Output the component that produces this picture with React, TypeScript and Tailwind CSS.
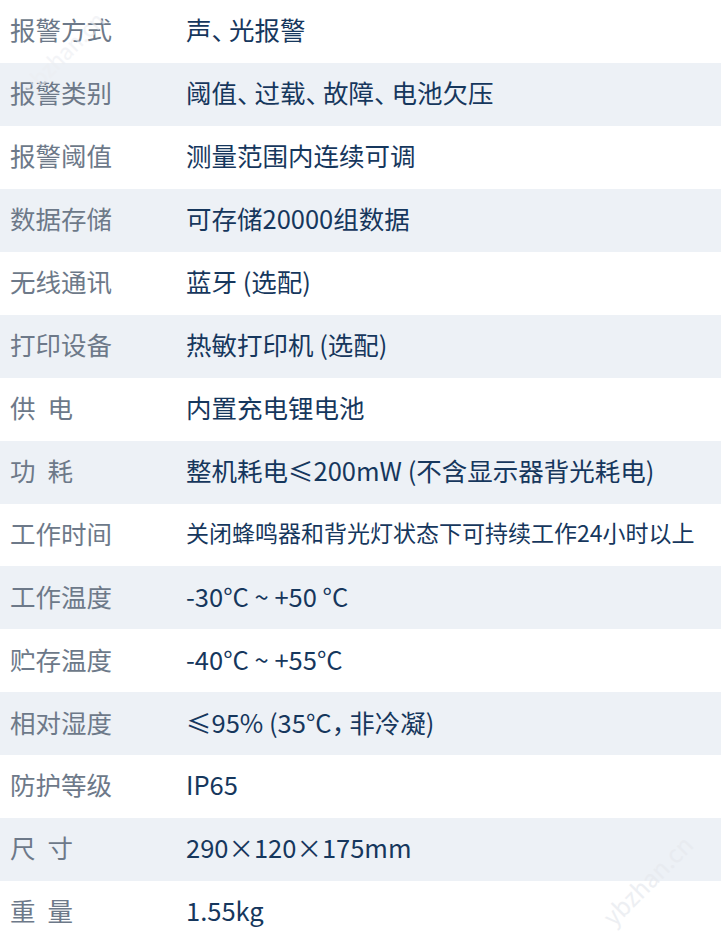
const rows: [string, string][] = [
  ["报警方式", "声、光报警"],
  ["报警类别", "阈值、过载、故障、电池欠压"],
  ["报警阈值", "测量范围内连续可调"],
  ["数据存储", "可存储20000组数据"],
  ["无线通讯", "蓝牙 (选配)"],
  ["打印设备", "热敏打印机 (选配)"],
  ["供 电", "内置充电锂电池"],
  ["功 耗", "整机耗电≤200mW (不含显示器背光耗电)"],
  ["工作时间", "关闭蜂鸣器和背光灯状态下可持续工作24小时以上"],
  ["工作温度", "-30°C ~ +50 °C"],
  ["贮存温度", "-40°C ~ +55°C"],
  ["相对湿度", "≤95% (35°C，非冷凝)"],
  ["防护等级", "IP65"],
  ["尺 寸", "290×120×175mm"],
  ["重 量", "1.55kg"],
];

function Label({ text }: { text: string }) {
  const parts = text.split(" ");
  if (parts.length === 1) return <>{text}</>;
  return (
    <>
      {parts[0]}
      <span className="inline-block w-[12px]" />
      {parts[1]}
    </>
  );
}

// 顿号、逗号收窄
function Value({ text }: { text: string }) {
  const bits = text.split(/([、，])/);
  return (
    <>
      {bits.map((b, i) =>
        b === "、" || b === "，" ? (
          <span key={i} className="tracking-[-8px]">
            {b}
          </span>
        ) : (
          <span key={i}>{b}</span>
        )
      )}
    </>
  );
}

export default function App() {
  return (
    <div
      className="relative h-[944px] w-[721px] overflow-hidden bg-white"
      style={{ fontFamily: '"Noto Sans CJK SC", "Noto Sans", sans-serif' }}
    >
      <div className="flex h-full flex-col">
        {rows.map(([k, v], i) => (
          <div
            key={k}
            className={`flex flex-1 items-center pb-[5px] ${
              i % 2 === 1 ? "bg-[#edf1f6]" : "bg-white"
            }`}
          >
            <div className="w-[186px] shrink-0 pl-[10px] text-[25.5px] leading-none text-[#6d7989]">
              <Label text={k} />
            </div>
            <div
              className={`whitespace-nowrap leading-none text-[#16375d] ${
                i === 8 ? "text-[23px]" : "text-[25.5px]"
              }`}
            >
              <Value text={v} />
            </div>
          </div>
        ))}
      </div>

      <div className="pointer-events-none absolute left-[10px] top-[36px] -rotate-[45deg] text-[22px] text-[#eceef2] opacity-60">
        ybzhan.cn
      </div>
      <div className="pointer-events-none absolute left-[590px] top-[862px] -rotate-[45deg] text-[24px] text-[#e6e9ee] opacity-70">
        ybzhan.cn
      </div>
    </div>
  );
}
